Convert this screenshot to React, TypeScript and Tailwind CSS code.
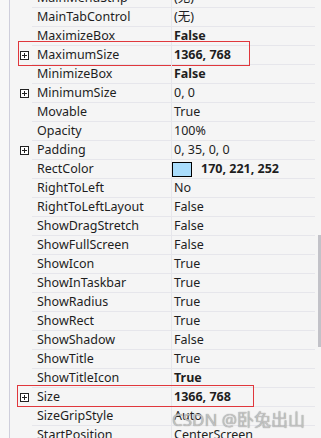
import React from "react";

type Row = {
  name: string;
  value: string;
  bold?: boolean;
  expand?: boolean;
  mark?: "a" | "b";
  swatch?: boolean;
};

const rows: Row[] = [
  { name: "MainMenuStrip", value: "(无)" },
  { name: "MainTabControl", value: "(无)" },
  { name: "MaximizeBox", value: "False", bold: true },
  { name: "MaximumSize", value: "1366, 768", bold: true, expand: true, mark: "a" },
  { name: "MinimizeBox", value: "False", bold: true },
  { name: "MinimumSize", value: "0, 0", expand: true },
  { name: "Movable", value: "True" },
  { name: "Opacity", value: "100%" },
  { name: "Padding", value: "0, 35, 0, 0", expand: true },
  { name: "RectColor", value: "170, 221, 252", bold: true, swatch: true },
  { name: "RightToLeft", value: "No" },
  { name: "RightToLeftLayout", value: "False" },
  { name: "ShowDragStretch", value: "False" },
  { name: "ShowFullScreen", value: "False" },
  { name: "ShowIcon", value: "True" },
  { name: "ShowInTaskbar", value: "True" },
  { name: "ShowRadius", value: "True" },
  { name: "ShowRect", value: "True" },
  { name: "ShowShadow", value: "False" },
  { name: "ShowTitle", value: "True" },
  { name: "ShowTitleIcon", value: "True", bold: true },
  { name: "Size", value: "1366, 768", bold: true, expand: true, mark: "b" },
  { name: "SizeGripStyle", value: "Auto" },
  { name: "StartPosition", value: "CenterScreen" },
];

const PlusBox = () => (
  <svg width="9" height="9" viewBox="0 0 9 9" className="block">
    <rect x="0.5" y="0.5" width="8" height="8" fill="#fff" stroke="#222" />
    <path d="M2 4.5h5M4.5 2v5" stroke="#222" />
  </svg>
);

const PropRow = ({ row }: { row: Row }) => (
  <div className="relative flex h-[19px]">
    <div className="flex w-[22px] items-center pl-[10px]">
      {row.expand && <PlusBox />}
    </div>
    <div className="flex w-[139px] items-center border-b border-[#e6e6eb] pl-[5px]">
      {row.name}
    </div>
    <div className="w-px bg-[#e6e6eb]" />
    <div
      className={`flex w-[143px] items-center border-b border-[#e6e6eb] pl-[2px] ${
        row.bold ? "font-bold" : ""
      }`}
    >
      {row.swatch && (
        <span className="ml-[-2px] mr-[9px] h-[15px] w-[20px] border border-black bg-[#aaddfc]" />
      )}
      {row.value}
    </div>
    {row.mark === "a" && (
      <div className="absolute left-[8px] top-[-5px] h-[25px] w-[232px] border border-[#e0373c]" />
    )}
    {row.mark === "b" && (
      <div className="absolute left-[7px] top-[-3px] h-[22px] w-[237px] border border-[#e0373c]" />
    )}
  </div>
);

export default function App() {
  return (
    <div
      className="relative flex h-[438px] w-[321px] overflow-hidden bg-[#f5f5f5] text-[12.5px] text-[#1e1e1e]"
      style={{ fontFamily: '"Noto Sans", "Noto Sans CJK SC", sans-serif' }}
    >
      <div className="w-[9px] bg-[#f8f8f8]" />
      <div className="w-px bg-[#cfcfdc]" />
      <div className="mt-[-11px] flex w-[305px] flex-col">
        {rows.map((r) => (
          <PropRow key={r.name} row={r} />
        ))}
      </div>
      <div className="ml-[3px] w-[3px] pt-[235px]">
        <div className="h-[112px] w-[3px] bg-[#c2c2c8]" />
      </div>
      <div className="absolute left-[172px] top-[407px] text-[17px] text-[#d0d0d0]/80 [text-shadow:0_0_1px_#777]">
        CSDN @卧兔出山
      </div>
    </div>
  );
}
